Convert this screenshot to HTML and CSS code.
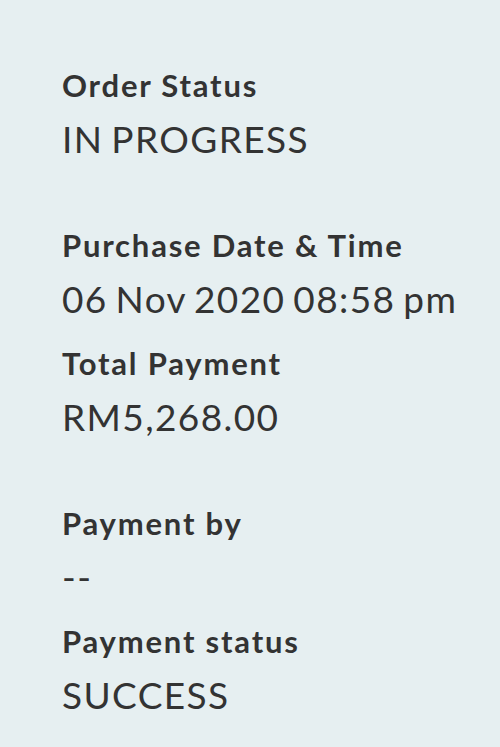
FILE: index.html
```html
<!DOCTYPE html>
<html>
<head>
<meta charset="utf-8">
<link rel="stylesheet" href="styles.css">
</head>
<body>
<main class="details">
  <section class="field field-wide">
    <div class="label">Order Status</div>
    <div class="value">IN PROGRESS</div>
  </section>
  <section class="field">
    <div class="label">Purchase Date &amp; Time</div>
    <div class="value">06 Nov 2020 08:58 pm</div>
  </section>
  <section class="field field-wide">
    <div class="label">Total Payment</div>
    <div class="value">RM5,268.00</div>
  </section>
  <section class="field">
    <div class="label">Payment by</div>
    <div class="value">--</div>
  </section>
  <section class="field">
    <div class="label">Payment status</div>
    <div class="value">SUCCESS</div>
  </section>
</main>
</body>
</html>
```
FILE: styles.css
```css
html, body {
  margin: 0;
  padding: 0;
  background: #e6eff1;
}
body {
  width: 500px;
  height: 747px;
  overflow: hidden;
  font-family: Lato, "Noto Sans", sans-serif;
  color: #333333;
}
.details {
  display: flex;
  flex-direction: column;
  padding: 63px 0 0 62px;
}
.field {
  display: flex;
  flex-direction: column;
  margin-bottom: 11px;
}
.field-wide {
  margin-bottom: 53px;
}
.label {
  font-weight: 700;
  font-size: 31px;
  line-height: 44px;
  letter-spacing: 1.8px;
}
.value {
  font-weight: 400;
  font-size: 37px;
  line-height: 63px;
  letter-spacing: 1.4px;
  word-spacing: -3px;
}
```
